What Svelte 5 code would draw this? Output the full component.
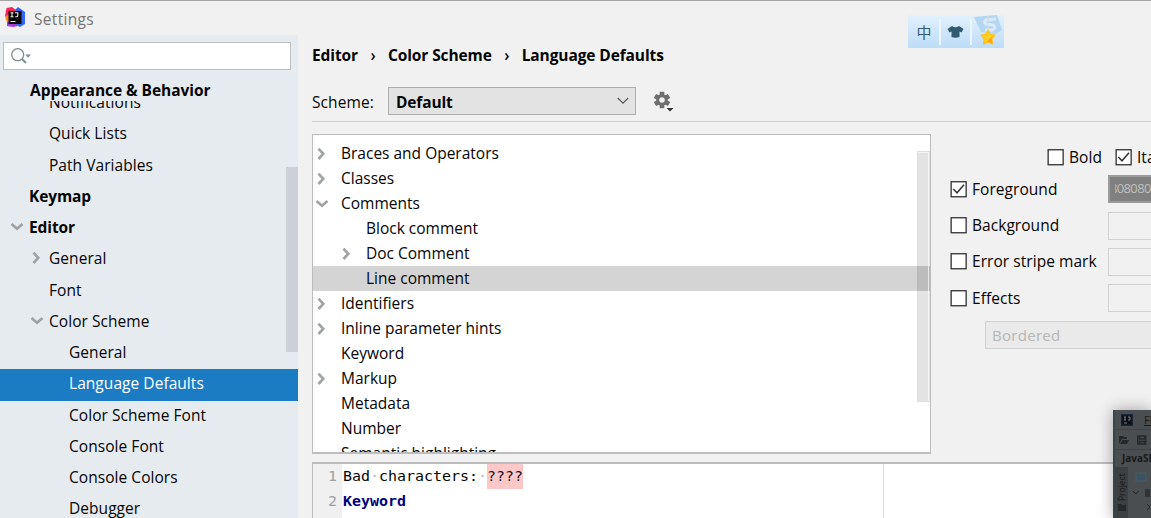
<script>
  const nav = [
    { t: 'Notifications', l: 1 },
    { t: 'Quick Lists', l: 1 },
    { t: 'Path Variables', l: 1 },
    { t: 'Keymap', l: 0, b: true },
    { t: 'Editor', l: 0, b: true, a: 'down' },
    { t: 'General', l: 1, a: 'right' },
    { t: 'Font', l: 1 },
    { t: 'Color Scheme', l: 1, a: 'down' },
    { t: 'General', l: 2 },
    { t: 'Language Defaults', l: 2, sel: true },
    { t: 'Color Scheme Font', l: 2 },
    { t: 'Console Font', l: 2 },
    { t: 'Console Colors', l: 2 },
    { t: 'Debugger', l: 2 }
  ];
  const tree = [
    { t: 'Braces and Operators', a: 'right' },
    { t: 'Classes', a: 'right' },
    { t: 'Comments', a: 'down' },
    { t: 'Block comment', sub: true },
    { t: 'Doc Comment', sub: true, a: 'right' },
    { t: 'Line comment', sub: true, sel: true },
    { t: 'Identifiers', a: 'right' },
    { t: 'Inline parameter hints', a: 'right' },
    { t: 'Keyword' },
    { t: 'Markup', a: 'right' },
    { t: 'Metadata' },
    { t: 'Number' },
    { t: 'Semantic highlighting' }
  ];
  const attrs = ['Foreground', 'Background', 'Error stripe mark', 'Effects'];
</script>

{#snippet arrow(dir)}
  <svg class="arrow" width="14" height="14" viewBox="0 0 14 14">
    {#if dir === 'down'}<path d="M2.500 4 8 8.700 13.500 4" />{:else if dir === 'right'}<path d="M4.500 1.700 9.200 6.800 4.500 12" />{/if}
  </svg>
{/snippet}

{#snippet check(on)}
  <svg class="check" width="17" height="17" viewBox="0 0 17 17">
    <rect x="1.150" y=".75" width="15" height="15" fill="#fff" stroke="#303030" stroke-width="1.300" />
    {#if on}<path d="M3.300 8 7 11.800 14 3.800" fill="none" stroke="#333" stroke-width="1.500" />{/if}
  </svg>
{/snippet}

<div class="window">
  <header>
    <svg width="22" height="22" viewBox="0 0 22 22">
      <path d="M2.500 1 8 0 12 3 9 13 5 15 1 9Z" fill="#fb2260" />
      <path d="M1 9 5 8 6 20 3 15 2 13Z" fill="#fb872b" />
      <path d="M11 3 14 0 21 5 21 17 16 20 10 17Z" fill="#3564f0" />
      <path d="M3 15 8 14 14 19 9 20 3 19Z" fill="#a83bd8" />
      <rect x="4.500" y="4" width="13" height="13" fill="#080808" />
      <path d="M6.500 5.700h3M8 5.700v4M6.500 9.700h3M11 5.700h2.800v2.800q0 1.200-1.300 1.200h-1.200M6.500 14.500h5" fill="none" stroke="#eee" stroke-width="1.100" />
    </svg>
    <span>Settings</span>
  </header>

  <div class="body">
    <aside>
      <div class="search">
        <svg width="24" height="20" viewBox="0 0 24 20">
          <circle cx="7.700" cy="7.700" r="6" fill="none" stroke="#7f8b91" stroke-width="1.300" />
          <path d="m12 12 4 4" stroke="#7f8b91" stroke-width="2" />
          <path d="M15.300 7.500h5.600l-2.800 3.200Z" fill="#7f8b91" />
        </svg>
      </div>
      <div class="sticky">Appearance &amp; Behavior</div>
      <div class="navclip">
        <div class="nav">
          {#each nav as n}
            <div class="navrow l{n.l}" class:bold={n.b} class:sel={n.sel}>
              {@render arrow(n.a)}<span>{n.t}</span>
            </div>
          {/each}
        </div>
        <div class="navthumb"></div>
      </div>
    </aside>

    <main>
      <div class="crumbs">
        <span>Editor</span><i>›</i><span>Color Scheme</span><i>›</i><span>Language Defaults</span>
      </div>
      <div class="scheme">
        <label for="scheme">Scheme:</label>
        <div class="combo" id="scheme">
          <b>Default</b>
          <svg width="12" height="8" viewBox="0 0 12 8"><path d="M.8 1 6 6.200 11.200 1" fill="none" stroke="#555" stroke-width="1.100" /></svg>
        </div>
        <svg class="gear" width="22" height="22" viewBox="0 0 22 22">
          <g fill="#6e6e6e">
            <path fill-rule="evenodd" d="M9 3.200a5.800 5.800 0 1 0 .01 0ZM9 6.200a2.800 2.800 0 1 1-.01 0Z" />
            {#each [0, 60, 120, 180, 240, 300] as r}
              <rect x="6.700" y=".8" width="4.600" height="3.800" transform="rotate({r} 9 9)" />
            {/each}
          </g>
          <path d="M13.500 17h7l-3.500 3.600Z" fill="#333" />
        </svg>
      </div>

      <div class="cols">
        <div class="tree">
          {#each tree as r}
            <div class="row" class:sub={r.sub} class:sel={r.sel}>{@render arrow(r.a)}<span>{r.t}</span></div>
          {/each}
          <div class="thumb"></div>
        </div>
        <div class="props">
          <div class="styles">
            {@render check(false)}<span>Bold</span>{@render check(true)}<span>Italic</span>
          </div>
          {#each attrs as a, i}
            <div class="attr">
              {@render check(i === 0)}<span class="name">{a}</span>
              <div class="field" class:dark={i === 0}>{#if i === 0}<span>808080</span>{/if}</div>
            </div>
          {/each}
          <div class="bordered">Bordered</div>
        </div>
      </div>

      <div class="editor">
        <div class="gutter"><span>1</span><span>2</span></div>
        <div class="code">
          <div>Bad<s>·</s>characters:<s>·</s><mark>????</mark></div>
          <div class="kw">Keyword</div>
        </div>
      </div>
    </main>
  </div>

  <div class="ime">
    <span>中</span>
    <em></em>
    <svg width="17" height="14" viewBox="0 0 17 14"><path d="M5 1q3.500 2.400 7 0l4.500 3-2 3.600-2-1V12q-4 1.400-8 0V6.600l-2 1L.5 4Z" fill="#315b70" /></svg>
    <em></em>
    <div class="star">
      <svg width="32" height="33" viewBox="0 0 32 33">
        <path d="M2 2 25 0 30 15 24 19 9 17Z" fill="#b5d6f1" />
        <path d="M24 4 14 5q-3 2 0 4l7 1q4 3-1 5l-7 0" fill="none" stroke="#d9ebfa" stroke-width="3" />
        <path d="M16 1v15" stroke="#d4dbe0" />
        <path d="m16 15.500 2.300 4 4.500.8-3.100 3.500.7 4.900-4.400-1.900-4.400 1.900.7-4.900L9.200 20.300l4.500-.8Z" fill="#ffd020" stroke="#ffc21b" stroke-width="1.500" stroke-linejoin="round" />
        <path d="m21 20.500-7 7 2-.7 4.400 1.900-.7-4.900Z" fill="#ffa414" />
      </svg>
    </div>
  </div>

  <div class="ghost">
    <div class="g1">
      <svg width="12" height="12" viewBox="0 0 12 12"><rect width="12" height="12" fill="#17253a" /><rect x="1.500" y="1.500" width="9" height="9" fill="#0b0e12" /><path d="M3 3h2M4 3v3M3 6h2M7 3h2v3H7M3 9h3" fill="none" stroke="#777f88" /></svg>
      <u>File</u>
    </div>
    <div class="g2">
      <svg width="30" height="10" viewBox="0 0 30 10"><path d="M0 1h4l1 1h3v2H3L0 9ZM3.500 5H10L8 9H1Z" fill="#25282a" /><path d="M18.800 1h8v8h-8ZM20.500 1v3h5V1M20.500 9V6.500h5V9" fill="none" stroke="#25282a" stroke-width="1.300" /></svg>
    </div>
    <div class="g3">JavaSE</div>
    <div class="g4">
      <div class="tool"><span>Project</span><svg width="8" height="7" viewBox="0 0 8 7"><path d="M0 0h3l1 1h4v6H0Z" fill="#26292b" /></svg></div>
      <svg width="22" height="54" viewBox="0 0 22 54"><rect x="8" y="6" width="10" height="8" fill="#3b5263" stroke="#4c5d68" /><path d="M5 24l2.800 3 2.800-3M19 37l3 3-3 3" fill="none" stroke="#24282a" /><path d="M17 22h4l1 1h3v7h-8Z" fill="#303336" /></svg>
    </div>
  </div>
</div>

<style>
  :global(body) { overflow: hidden; background: #f1f1f1; }
  .window { position: relative; width: 1151px; height: 518px; overflow: hidden; box-sizing: border-box; border-top: 1px solid #a5a5a5; background: #f1f1f1; color: #050505; font: 15.5px/25px 'Open Sans', 'Noto Sans CJK SC', sans-serif; white-space: nowrap; display: flex; flex-direction: column; }
  svg { display: block; flex: none; }
  header { height: 34px; flex: none; display: flex; align-items: center; gap: 8px; padding-left: 4px; color: #767676; letter-spacing: .3px; }
  header span { padding-top: 2px; }
  .body { flex: 1; display: flex; min-height: 0; }
  aside { width: 298px; flex: none; background: #e6ebef; display: flex; flex-direction: column; }
  .search { height: 28px; box-sizing: border-box; margin: 7px 7px 0 3px; border: 1px solid #bebebe; background: #fff; padding: 4px 0 0 6px; flex: none; }
  .sticky { height: 31px; flex: none; line-height: 41px; padding-left: 30px; font-weight: 700; letter-spacing: -.05px; }
  .navclip { flex: 1; overflow: hidden; position: relative; }
  .nav { margin-top: -13px; }
  .navrow { height: 31.25px; display: flex; align-items: center; gap: 5px; padding-left: 10px; letter-spacing: .05px; }
  .navrow span { padding-bottom: 2px; }
  .navrow.l1 { padding-left: 30px; }
  .navrow.l2 { padding-left: 50px; }
  .navrow.sel { background: #1b7cc4; color: #fff; }
  .bold { font-weight: 700; letter-spacing: -.1px; }
  .arrow { fill: none; stroke: #a0a3a5; stroke-width: 2.700; overflow: visible; }
  .navrow .arrow { margin: 0 1px 3px -1px; }
  .navthumb { position: absolute; right: 0; top: 66px; width: 12px; height: 185px; background: #cdd1d5; }
  main { flex: 1; min-width: 0; padding-left: 14px; display: flex; flex-direction: column; }
  .crumbs { height: 41px; display: flex; align-items: center; font-weight: 700; flex: none; letter-spacing: -.11px; }
  .crumbs i { font-style: normal; font-weight: 600; width: 30px; text-align: center; }
  .scheme { height: 45px; flex: none; display: flex; align-items: center; border-bottom: 1px solid #cdcdcd; }
  .scheme label { width: 76px; padding-top: 8px; letter-spacing: .1px; }
  .combo { width: 248px; height: 28px; box-sizing: border-box; border: 1px solid #adadad; background: #e3e3e3; display: flex; align-items: center; justify-content: space-between; padding: 0 6px 0 7px; margin-top: 4px; }
  .combo b { padding-top: 3px; letter-spacing: -.15px; }
  .gear { margin: 7px 0 0 17px; }
  .cols { height: 320px; margin-top: 12px; display: flex; flex: none; }
  .tree { position: relative; width: 619px; box-sizing: border-box; border: 1px solid #bdbdbd; border-bottom-width: 2px; background: #fff; padding-top: 6px; overflow: hidden; flex: none; }
  .row { height: 25px; display: flex; align-items: center; gap: 13px; padding-left: 1px; }
  .row.sub { padding-left: 26px; }
  .row.sel { background: #d4d4d4; }
  .thumb { position: absolute; right: 0; top: 16px; width: 13px; height: 251px; box-sizing: border-box; background: rgba(0, 0, 0, .11); border: 1px solid rgba(0, 0, 0, .02); box-shadow: inset -1px 1px rgba(255, 255, 255, .7); }
  .row.sel { position: relative; z-index: 0; }
  .props { flex: 1; min-width: 0; padding: 10px 0 0 19px; overflow: hidden; }
  .styles { display: flex; align-items: center; padding-left: 97px; height: 27px; }
  .styles span { margin: 0 13px 0 5px; }
  .styles span, .attr .name { letter-spacing: .05px; }
  .attr { height: 36.400px; display: flex; align-items: center; }
  .attr .name { width: 136px; margin-left: 5px; flex: none; }
  .field { box-sizing: border-box; width: 60px; height: 28px; border: 1px solid #d2d2d2; flex: none; }
  .field.dark { background: #808080; border: 2px solid #9b9b9b; color: #bfbfbf; font-size: 13px; line-height: 23px; overflow: hidden; letter-spacing: -.65px; }
  .field.dark span { display: block; width: 50px; margin-left: 5px; overflow: hidden; text-indent: -5px; }
  .bordered { margin: 4px 0 0 35px; width: 180px; height: 28px; box-sizing: border-box; border: 1px solid #d2d2d2; background: #eaeaea; color: #b6b6b6; padding-left: 6px; line-height: 27px; font-size: 15px; letter-spacing: .3px; }
  .editor { margin-top: 8px; flex: 1; display: flex; border: 1px solid #bdbdbd; border-width: 2px 0 0 1px; background: #fff; font: 14.950px/25px 'DejaVu Sans Mono', monospace; }
  .gutter { width: 24px; padding-right: 5px; background: #f0f0f0; color: #a0a0a0; display: flex; flex-direction: column; align-items: flex-end; }
  .code { width: 540px; padding-left: 1px; border-right: 1px solid #dedede; }
  .code s { text-decoration: none; color: #b8b8b8; }
  mark { background: #ffc8c8; color: #111; display: inline-block; height: 25px; }
  .kw { color: #000080; font-weight: 700; }
  .ime { position: absolute; left: 908px; top: 14px; width: 96px; height: 33px; background: linear-gradient(#e2f1fd, #bddcf7); display: flex; align-items: center; color: #315b70; overflow: hidden; }
  .ime span { width: 32px; padding-left: 1px; box-sizing: border-box; text-align: center; font: 15px/30px 'Noto Sans CJK SC', sans-serif; }
  .ime em { width: 2px; height: 26px; background: #edf6fd; }
  .ime > svg { margin: 0 6px; }
  .star { width: 32px; height: 33px; }
  .ghost { position: absolute; left: 1113px; top: 409px; width: 38px; height: 109px; box-sizing: border-box; border-left: 2px solid #34464b; background: #4b4e50; box-shadow: 0 0 15px rgba(0, 0, 0, .35); font-size: 11px; line-height: 20px; color: #17191b; }
  .g1, .g2 { height: 20px; box-sizing: border-box; display: flex; align-items: center; padding-left: 6px; border-bottom: 1px solid #414446; overflow: hidden; }
  .g1 { gap: 11px; }
  .g2 { padding-left: 4px; }
  .g3 { height: 17px; line-height: 17px; font-size: 10px; font-weight: 700; padding-left: 7px; overflow: hidden; }
  .g4 { display: flex; height: 52px; overflow: hidden; }
  .tool { width: 13px; background: #3d4042; display: flex; flex-direction: column; align-items: center; gap: 3px; padding-top: 4px; }
  .tool span { writing-mode: vertical-rl; transform: rotate(180deg); font-size: 8.500px; line-height: 12px; height: 30px; }
</style>
